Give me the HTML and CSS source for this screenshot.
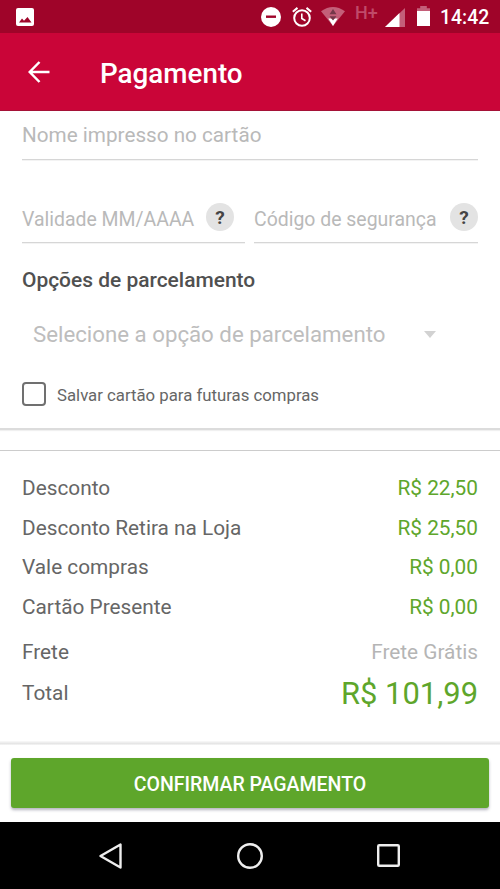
FILE: index.html
```html
<!DOCTYPE html>
<html lang="pt-BR">
<head>
<meta charset="utf-8">
<title>Pagamento</title>
<link rel="stylesheet" href="styles.css">
</head>
<body>
<div class="screen">
  <div class="status">
    <svg class="ico-photo" width="18" height="18" viewBox="0 0 18 18"><rect width="18" height="18" rx="2" fill="#fff"/><path d="M3 14.5 6 10.500l2 2.300L11.500 9l4 5.500z" fill="#9f0429"/></svg>
    <div class="status-right">
      <svg class="ico-dnd" width="20" height="20" viewBox="0 0 20 20"><circle cx="10" cy="10" r="10" fill="#fff"/><path d="M5 9.700h10" stroke="#9f0429" stroke-width="2.400"/></svg>
      <svg class="ico-alarm" width="20" height="20" viewBox="0 0 20 20" fill="none" stroke="#fff"><circle cx="10" cy="11" r="7.800" stroke-width="2"/><path d="M9.800 6.500v5l3.700 2.300" stroke-width="1.600"/><path d="M.8 4.700 5.500.9M19.200 4.700 14.500.9" stroke-width="2"/></svg>
      <svg class="ico-wifi" width="24" height="19" viewBox="0 0 24 19"><path d="M0 4.300Q12-4.300 24 4.300L12 19z" fill="#c45f79"/><path d="M7.300 11.500h9.400L12 19z" fill="#fff"/><path d="M12 2l3.500 5.200h-7zM8.500 9.200h7L12 13.500z" fill="#75384a"/></svg>
      <span class="network">H+</span>
      <svg class="ico-signal" width="20" height="19" viewBox="0 0 20 19"><path d="M20 0v19H0z" fill="#c45f79"/><path d="M14.500 5v14H0z" fill="#fff"/></svg>
      <svg class="ico-battery" width="13" height="20" viewBox="0 0 13 20"><path d="M0 2.300h3.200V0h6.600v2.300H13V7H0z" fill="#c45f79"/><path d="M0 5h13v15H0z" fill="#fff"/></svg>
      <span class="clock">14:42</span>
    </div>
  </div>
  <header class="appbar">
    <svg width="22" height="22" viewBox="0 0 22 22" fill="none" stroke="#fff" stroke-width="2.500"><path d="M21.500 11H2M11.500 1 1.700 11l9.800 10"/></svg>
    <h1>Pagamento</h1>
  </header>
  <main>
    <section class="card-form">
      <div class="field name"><span>Nome impresso no cartão</span></div>
      <div class="field-row">
        <div class="field expiry"><span>Validade MM/AAAA</span><b class="help">?</b></div>
        <div class="field cvv"><span>Código de segurança</span><b class="help">?</b></div>
      </div>
      <h2>Opções de parcelamento</h2>
      <div class="select"><span>Selecione a opção de parcelamento</span><i class="caret"></i></div>
      <div class="save"><i class="box"></i><span>Salvar cartão para futuras compras</span></div>
    </section>
    <section class="summary">
      <div class="line"><span>Desconto</span><span class="value">R$ 22,50</span></div>
      <div class="line"><span>Desconto Retira na Loja</span><span class="value">R$ 25,50</span></div>
      <div class="line"><span>Vale compras</span><span class="value">R$ 0,00</span></div>
      <div class="line"><span>Cartão Presente</span><span class="value">R$ 0,00</span></div>
      <div class="line shipping"><span>Frete</span><span class="free">Frete Grátis</span></div>
      <div class="line total"><span>Total</span><span class="value">R$ 101,99</span></div>
    </section>
  </main>
  <footer class="action"><button>CONFIRMAR PAGAMENTO</button></footer>
  <nav class="navbar">
    <svg width="24" height="26" viewBox="0 0 24 26"><path d="M22.500 1.500v23L2.500 13z" fill="none" stroke="#eee" stroke-width="2.400" stroke-linejoin="round"/></svg>
    <svg width="26" height="26" viewBox="0 0 26 26"><circle cx="13" cy="13" r="11.800" fill="none" stroke="#eee" stroke-width="2.400"/></svg>
    <svg class="recents" width="24" height="24" viewBox="0 0 24 24"><rect x="1.200" y="1.200" width="20.600" height="20.600" rx="1" fill="none" stroke="#eee" stroke-width="2.400"/></svg>
  </nav>
</div>
</body>
</html>
```
FILE: styles.css
```css
* { box-sizing: border-box; }
body { margin: 0; font-family: Roboto, sans-serif; background: #fff; color: #666; }
svg { display: block; flex: none; }
h1, h2 { margin: 0; font-weight: 500; }
.screen { width: 500px; height: 889px; display: flex; flex-direction: column; overflow: hidden; }

.status { height: 33px; flex: none; background: #9f0429; display: flex; justify-content: space-between; align-items: flex-start; padding: 0 11px 0 16px; color: #fff; }
.ico-photo { margin-top: 8px; }
.status-right { display: flex; align-items: flex-start; }
.ico-dnd { margin-top: 7px; }
.ico-alarm { margin: 7px 0 0 11px; }
.ico-wifi { margin: 7px 0 0 9px; }
.network { width: 23px; margin: 4px 0 0 10px; font-size: 18px; line-height: 17px; font-weight: 500; color: #c04a69; }
.ico-signal { margin: 8px 0 0 7px; }
.ico-battery { margin: 6px 0 0 12px; }
.clock { width: 49px; margin: 6px 0 0 10px; font-size: 19.4px; line-height: 23px; font-weight: 500; white-space: nowrap; }

.appbar { height: 78px; flex: none; background: #ca0538; border-bottom: 1px solid #a51237; display: flex; align-items: center; padding: 1px 0 0 28px; gap: 50px; color: #fff; }
.appbar h1 { font-size: 27.8px; line-height: 34px; padding-top: 4px; }

main { height: 630px; flex: none; }
.card-form { height: 319px; padding: 0 22px; border-bottom: 2px solid #dcdcdc; box-shadow: 0 1px 1px #f0f0f0; }
.field { display: flex; justify-content: space-between; align-items: flex-end; border-bottom: 1px solid #d6d6d6; box-shadow: 0 1px 0 #f3f3f3; color: #b9b9b9; font-size: 20.7px; line-height: 24px; white-space: nowrap; }
.name { height: 49px; padding-bottom: 12px; }
.field-row { display: flex; gap: 9px; margin-top: 34px; }
.field-row .field { height: 49px; font-size: 19.45px; padding-bottom: 11px; }
.expiry { width: 223px; padding-right: 11px; }
.cvv { width: 224px; }
.field-row .field > span { line-height: 24px; margin-bottom: -1px; }
.help { width: 28px; height: 28px; border-radius: 50%; background: #e3e3e3; color: #444; font-size: 19px; line-height: 29px; text-align: center; font-weight: 700; }
h2 { margin-top: 25px; font-size: 20.95px; line-height: 24px; color: #505050; }
.select { display: flex; justify-content: space-between; align-items: center; margin-top: 28px; padding: 0 42px 0 11px; font-size: 22.25px; line-height: 28px; color: #bdbdbd; white-space: nowrap; }
.caret { border: 6.5px solid transparent; border-top: 7px solid #d2d2d2; border-bottom: 0; }
.save { display: flex; align-items: center; margin-top: 34px; gap: 11px; font-size: 16.75px; line-height: 24px; height: 24px; }
.save span { padding-top: 2px; }
.box { width: 24px; height: 24px; border: 2px solid #707070; border-radius: 4px; }

.summary { margin-top: 20px; border-top: 1px solid #ccc; padding: 17px 22px 0; font-size: 20.8px; }
.line { height: 39.7px; display: flex; justify-content: space-between; align-items: center; white-space: nowrap; }
.value { color: #5ea62b; }
.free { color: #b5b5b5; }
.shipping { margin-top: 5.6px; }
.total { margin-top: 1.6px; }
.total .value { font-size: 30.9px; }

.action { height: 81px; flex: none; background: linear-gradient(#fafafa, #e2e2e2 3px, #fff 4px); padding: 17px 11px 0; }
.action button { display: block; width: 478px; height: 50px; border: 0; border-radius: 3px; background: #5ea62b; color: #fff; font: 500 19.5px/50px Roboto, sans-serif; padding: 2px 0 0; box-shadow: 0 2px 3px rgba(40, 40, 70, .35); }

.navbar { flex: 1; background: #000; display: flex; align-items: center; justify-content: center; gap: 115px; }
.recents { margin: 0 1px 0 -1px; }
```
